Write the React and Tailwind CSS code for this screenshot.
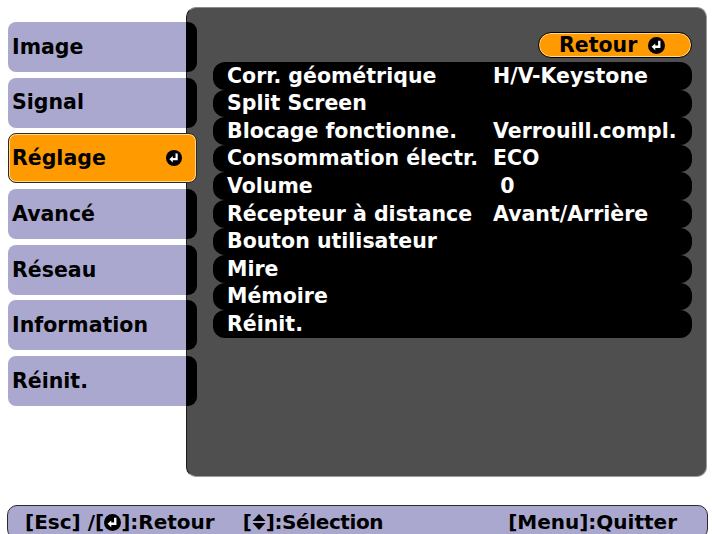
import React from "react";

function EnterIcon({ size = 16 }) {
  return (
    <svg width={size} height={size} viewBox="0 0 16 16" className="shrink-0">
      <circle cx="8" cy="8" r="8" fill="#000" />
      <path d="M10.6 3.6 V9.2 H6.2" stroke="#fff" strokeWidth="2.2" fill="none" />
      <path d="M3.4 9.2 L6.8 6 V12.4 Z" fill="#fff" />
    </svg>
  );
}

function UpDownIcon() {
  return (
    <svg width="14" height="18" viewBox="0 0 14 18" className="shrink-0">
      <path d="M0.5 8 L7 1 L13.5 8 Z" fill="#000" />
      <path d="M0.5 10 L7 17 L13.5 10 Z" fill="#000" />
    </svg>
  );
}

const tabs = ["Image", "Signal", "Réglage", "Avancé", "Réseau", "Information", "Réinit."];

const rows = [
  ["Corr. géométrique", "H/V-Keystone"],
  ["Split Screen", ""],
  ["Blocage fonctionne.", "Verrouill.compl."],
  ["Consommation électr.", "ECO"],
  ["Volume", "\u00a00"],
  ["Récepteur à distance", "Avant/Arrière"],
  ["Bouton utilisateur", ""],
  ["Mire", ""],
  ["Mémoire", ""],
  ["Réinit.", ""],
];

export default function App() {
  return (
    <div className="w-[712px] h-[534px] overflow-hidden bg-white font-['DejaVu_Sans',sans-serif] font-bold text-[20.5px] leading-none">
      <div className="flex pt-[7px]">
        {/* Left tabs */}
        <div className="relative z-10 ml-[8px] -mr-[11px] mt-[15px] flex w-[189px] flex-col gap-[5.7px]">
          {tabs.map((t, i) =>
            i === 2 ? (
              <div
                key={t}
                className="flex h-[50px] items-center justify-between rounded-[8px] border border-[#2a2a2a] bg-[#ff9a00] pl-[3px] pr-[14px] text-black shadow-[inset_0_0_0_1px_#ffd890]"
              >
                <span>{t}</span>
                <EnterIcon size={16} />
              </div>
            ) : (
              <div key={t} className="flex h-[50px]">
                <div className="flex w-[178px] items-center rounded-l-[8px] bg-[#aba8cf] pl-[4px] text-black">
                  {t}
                </div>
                <div className="w-[11px] rounded-r-[9px] bg-black" />
              </div>
            )
          )}
        </div>

        {/* Right panel */}
        <div className="flex h-[470px] w-[521px] flex-col rounded-[10px] border border-[#9c9c9c] border-l-[#1a1a1a] border-t-[#8a8a8a] bg-[#4f4f4f] pt-[24px]">
          <div className="flex justify-end pr-[14px]">
            <div className="flex h-[26px] w-[154px] items-center gap-[11px] rounded-full border border-black bg-[#ff9a00] pl-[20px] text-black shadow-[inset_0_0_0_1px_#ffd890]">
              <span>Retour</span>
              <EnterIcon size={17} />
            </div>
          </div>
          <div className="ml-[26px] mt-[4px] flex w-[479px] flex-col">
            {rows.map(([label, value]) => (
              <div
                key={label}
                className="flex h-[27.6px] items-center rounded-[12px] bg-black pl-[14px] text-white"
              >
                <span className="w-[266px] shrink-0 whitespace-nowrap">{label}</span>
                <span className="whitespace-nowrap">{value}</span>
              </div>
            ))}
          </div>
        </div>
      </div>

      {/* Bottom bar */}
      <div className="ml-[7px] mt-[28px] flex h-[34px] w-[701px] items-start justify-between rounded-[10px] border border-[#2a2a2a] bg-[#aba8cf] pl-[17px] pr-[30px] pt-[6px] text-[20px] text-black">
        <div className="flex items-center whitespace-nowrap">
          <span>[Esc] /[</span>
          <EnterIcon size={17} />
          <span>]:Retour</span>
          <span className="ml-[28px]">[</span>
          <UpDownIcon />
          <span className="tracking-[-0.4px]">]:Sélection</span>
        </div>
        <span className="whitespace-nowrap">[Menu]:Quitter</span>
      </div>
    </div>
  );
}
